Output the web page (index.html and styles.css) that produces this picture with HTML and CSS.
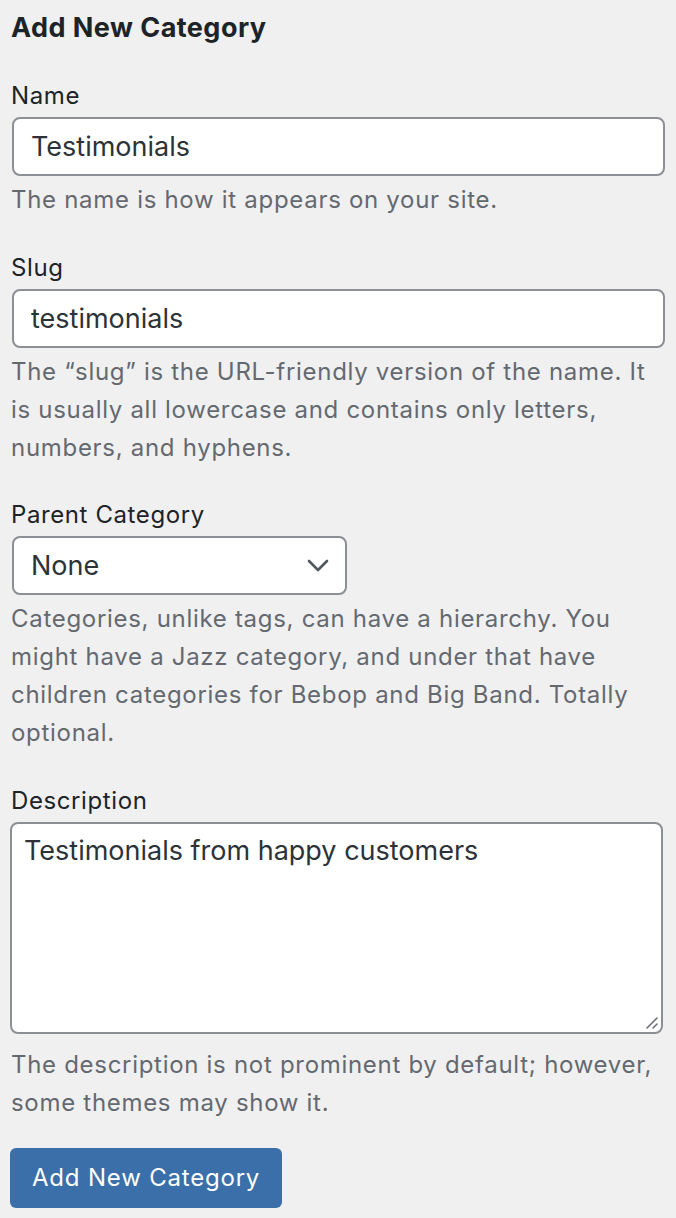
FILE: index.html
```html
<!DOCTYPE html>
<html>
<head>
<meta charset="utf-8">
<link rel="stylesheet" href="styles.css">
</head>
<body>
<form class="form">
  <h2 class="title">Add New Category</h2>
  <div class="field">
    <label class="label">Name</label>
    <div class="input">Testimonials</div>
    <p class="help">The name is how it appears on your site.</p>
  </div>
  <div class="field">
    <label class="label">Slug</label>
    <div class="input">testimonials</div>
    <p class="help">The “slug” is the URL-friendly version of the name. It is usually all lowercase and contains only letters, numbers, and hyphens.</p>
  </div>
  <div class="field">
    <label class="label">Parent Category</label>
    <div class="select"><span>None</span>
      <svg class="chev" width="22" height="14" viewBox="0 0 22 14"><path d="M2 2 L11 11 L20 2" fill="none" stroke="#50575e" stroke-width="2.6" stroke-linecap="round" stroke-linejoin="round"/></svg>
    </div>
    <p class="help">Categories, unlike tags, can have a hierarchy. You might have a Jazz category, and under that have children categories for Bebop and Big Band. Totally optional.</p>
  </div>
  <div class="field field-last">
    <label class="label">Description</label>
    <div class="textarea">Testimonials from happy customers
      <svg class="grip" width="14" height="14" viewBox="0 0 14 14"><path d="M13 3 L3 13 M13 9 L9 13" stroke="#6b6e72" stroke-width="1.6" stroke-linecap="round"/></svg>
    </div>
    <p class="help help-area">The description is not prominent by default; however, some themes may show it.</p>
  </div>
  <div class="actions"><button type="button" class="btn">Add New Category</button></div>
</form>
</body>
</html>
```

FILE: styles.css
```css
html, body {
  margin: 0;
  padding: 0;
  background: #f0f0f1;
}
body {
  font-family: Inter, "Noto Sans", sans-serif;
  color: #1d2327;
}
.form {
  padding: 12px 12px 0 11px;
  display: flex;
  flex-direction: column;
}
.title {
  margin: 0 0 36px 0;
  font-size: 27px;
  line-height: 32px;
  font-weight: 700;
  letter-spacing: 0.45px;
  color: #1d2327;
}
.field {
  display: flex;
  flex-direction: column;
  margin-bottom: 32.5px;
}
.field-last {
  margin-bottom: 0;
}
.label {
  font-size: 24px;
  line-height: 32px;
  letter-spacing: 0.6px;
  margin-bottom: 5px;
}
.input, .select, .textarea {
  box-sizing: border-box;
  background: #fff;
  border: 2px solid #8c8f94;
  border-radius: 8px;
  font-size: 27px;
  color: #2c3338;
}
.input {
  margin-left: 1px;
  width: 653px;
  height: 59px;
  padding: 0 17px;
  display: flex;
  align-items: center;
}
.select {
  margin-left: 1px;
  width: 335px;
  height: 59px;
  padding: 0 16px 0 17px;
  display: flex;
  align-items: center;
  justify-content: space-between;
}
.textarea {
  position: relative;
  margin-left: -1px;
  width: 653px;
  height: 212px;
  padding: 9px 12px;
  line-height: 36px;
}
.grip {
  position: absolute;
  right: 3px;
  bottom: 3px;
}
.help {
  margin: 5px 0 0 0;
  font-size: 24px;
  line-height: 38px;
  letter-spacing: 0.7px;
  color: #646970;
}
.help-area {
  margin-top: 12px;
}
.actions {
  margin-top: 26px;
}
.btn {
  margin-left: -1px;
  background: #3a6fa9;
  color: #fff;
  border: none;
  border-radius: 6px;
  height: 60px;
  padding: 0 22px;
  font-family: Inter, "Noto Sans", sans-serif;
  font-size: 24px;
  letter-spacing: 0.8px;
}
```
